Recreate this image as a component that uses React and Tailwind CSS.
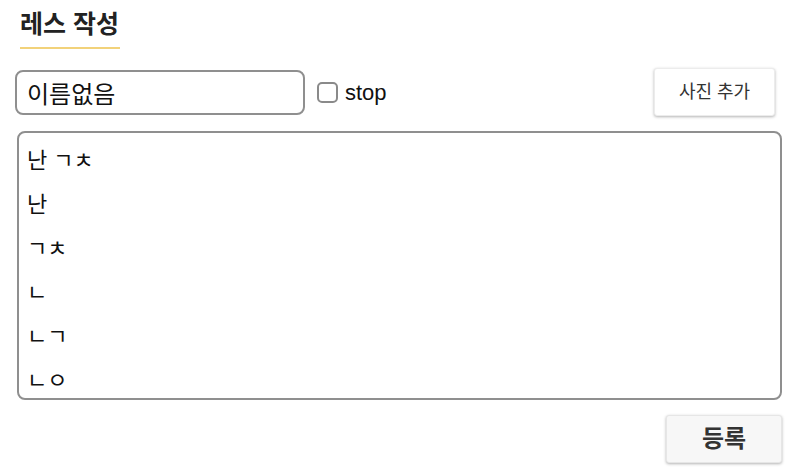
import React from 'react';

const lines = ['난 ㄱㅊ', '난', 'ㄱㅊ', 'ㄴ', 'ㄴㄱ', 'ㄴㅇ'];

const App = () => {
  return (
    <div className="w-[800px] h-[472px] bg-white overflow-hidden font-['Liberation_Sans','Noto_Sans_CJK_KR',sans-serif] text-[#222]">
      <div className="pl-5 pt-[5px]">
        <h1 className="inline-block text-[25px] font-bold leading-[38px] pb-[4px] border-b-2 border-[#f2d27a] pr-[1px]">
          레스 작성
        </h1>
      </div>

      <div className="flex items-center mt-[19px] pl-[15px] pr-[25px]">
        <input
          type="text"
          defaultValue="이름없음"
          className="w-[290px] h-[45px] rounded-lg border-2 border-[#8f8f8f] px-[10px] text-[24px] text-[#111] outline-none"
        />
        <label className="flex items-center ml-3 text-[22px] text-[#111]">
          <span className="w-[21px] h-[21px] rounded-[5px] border-2 border-[#8a8a8a] bg-white" />
          <span className="ml-[7px]">stop</span>
        </label>
        <button
          type="button"
          className="ml-auto w-[121px] h-[48px] bg-white rounded-[3px] border border-[#ececec] shadow-[0_1px_3px_rgba(0,0,0,0.3)] text-[18px] text-[#333]"
        >
          사진 추가
        </button>
      </div>

      <div className="ml-[17px] mt-[15px] w-[765px] h-[269px] rounded-lg border-2 border-[#8f8f8f] overflow-hidden px-2 pt-[6px]">
        {lines.map((line, i) => (
          <div key={i} className="text-[22px] leading-[44px] text-[#111] whitespace-pre">
            {line}
          </div>
        ))}
      </div>

      <div className="flex justify-end pr-[18px] mt-[15px]">
        <button
          type="button"
          className="w-[116px] h-[48px] bg-[#f7f7f7] rounded-[3px] border border-[#e6e6e6] shadow-[0_1px_3px_rgba(0,0,0,0.3)] text-[24px] font-bold text-[#333]"
        >
          등록
        </button>
      </div>
    </div>
  );
};

export default App;
